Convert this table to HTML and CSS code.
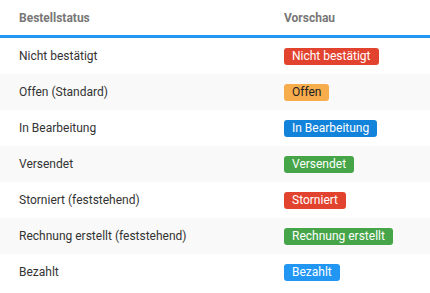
FILE: index.html
```html
<!DOCTYPE html>
<html lang="de">
<head>
<meta charset="utf-8">
<title>Bestellstatus</title>
<link rel="stylesheet" href="styles.css">
</head>
<body>
<table class="status-table">
  <thead>
    <tr>
      <th class="col-name">Bestellstatus</th>
      <th class="col-preview">Vorschau</th>
    </tr>
  </thead>
  <tbody>
    <tr><td>Nicht bestätigt</td><td><span class="badge badge-red">Nicht bestätigt</span></td></tr>
    <tr><td>Offen (Standard)</td><td><span class="badge badge-orange">Offen</span></td></tr>
    <tr><td>In Bearbeitung</td><td><span class="badge badge-blue">In Bearbeitung</span></td></tr>
    <tr><td>Versendet</td><td><span class="badge badge-green">Versendet</span></td></tr>
    <tr><td>Storniert (feststehend)</td><td><span class="badge badge-red">Storniert</span></td></tr>
    <tr><td>Rechnung erstellt (feststehend)</td><td><span class="badge badge-green">Rechnung erstellt</span></td></tr>
    <tr><td>Bezahlt</td><td><span class="badge badge-sky">Bezahlt</span></td></tr>
  </tbody>
</table>
</body>
</html>
```

FILE: styles.css
```css
html, body {
  margin: 0;
  padding: 0;
  background: #fff;
}

body {
  font-family: Roboto, "Liberation Sans", sans-serif;
  font-size: 12px;
  color: #333;
}

.status-table {
  width: 100%;
  border-collapse: collapse;
}

.status-table th {
  height: 35px;
  padding: 0 0 0 19px;
  text-align: left;
  vertical-align: middle;
  font-size: 12px;
  font-weight: 700;
  color: #777;
  border-bottom: 3px solid #2196f3;
}

.status-table th.col-name {
  width: 246px;
}

.status-table td {
  height: 36px;
  padding: 0 0 0 19px;
  vertical-align: middle;
}

.status-table tbody tr:nth-child(even) {
  background: #f9f9f9;
}

.badge {
  display: inline-block;
  padding: 1px 8px;
  line-height: 15px;
  border-radius: 3px;
  color: #fff;
  font-size: 12px;
  vertical-align: middle;
}

.badge-red { background: #e2432f; }
.badge-orange { background: #f7ad4c; color: #222; }
.badge-blue { background: #1283da; }
.badge-green { background: #45a548; }
.badge-sky { background: #2196f3; }
```
